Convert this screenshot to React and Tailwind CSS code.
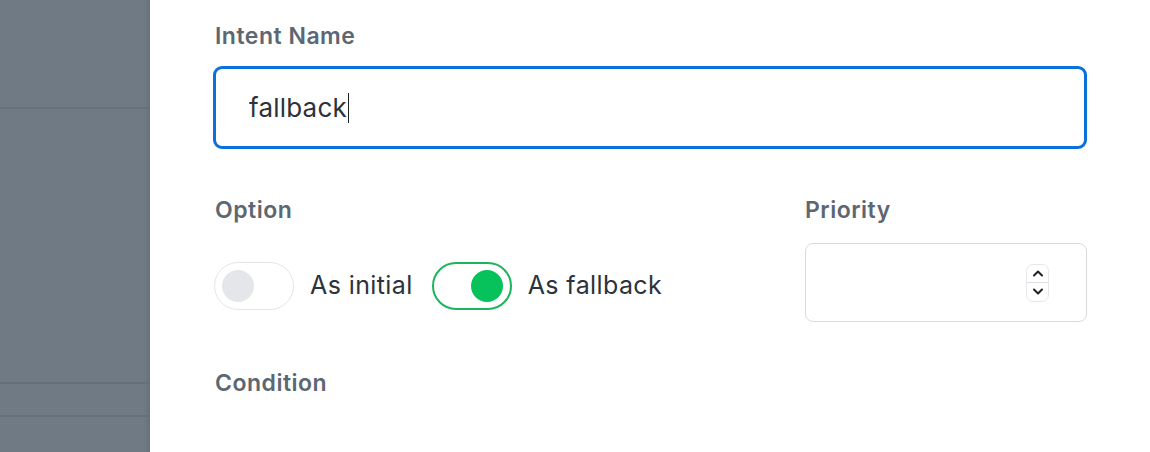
import React from "react";

function Toggle({ on }) {
  return (
    <div
      className={
        on
          ? "flex h-[48px] w-[80px] items-center justify-end rounded-full border-2 border-[#1db55c] bg-white px-[7px]"
          : "flex h-[48px] w-[80px] items-center justify-start rounded-full border-[1.5px] border-[#e3e5e8] bg-white px-[7px]"
      }
    >
      <div className={on ? "h-[32px] w-[32px] rounded-full bg-[#07c25a]" : "h-[32px] w-[32px] rounded-full bg-[#e4e6e9]"} />
    </div>
  );
}

function Spinner() {
  return (
    <div className="flex h-[38px] w-[23px] flex-col overflow-hidden rounded-[7px] border border-[#e6e7e9] bg-white">
      <div className="flex flex-1 items-center justify-center border-b border-[#dcdde0]">
        <svg width="12" height="8" viewBox="0 0 12 8" fill="none">
          <path d="M2 6.5 6 2.5 10 6.5" stroke="#1f2328" strokeWidth="2" strokeLinecap="round" strokeLinejoin="round" />
        </svg>
      </div>
      <div className="flex flex-1 items-center justify-center">
        <svg width="12" height="8" viewBox="0 0 12 8" fill="none">
          <path d="M2 1.5 6 5.5 10 1.5" stroke="#1f2328" strokeWidth="2" strokeLinecap="round" strokeLinejoin="round" />
        </svg>
      </div>
    </div>
  );
}

export default function App() {
  return (
    <div className="flex h-[452px] w-[1150px] overflow-hidden bg-white font-['Inter','Noto_Sans',sans-serif]">
      {/* dimmed page behind the drawer */}
      <div className="relative flex h-full w-[150px] shrink-0 flex-col bg-[#6f7a85]">
        <div className="h-[107px]" />
        <div className="h-[2px] bg-[#65707a]" />
        <div className="h-[273px]" />
        <div className="h-[2px] bg-[#65707a]" />
        <div className="h-[31px]" />
        <div className="h-[2px] bg-[#65707a]" />
        <div className="absolute inset-y-0 right-0 w-[6px] bg-gradient-to-r from-transparent to-[#66717b]" />
      </div>

      <div className="flex flex-1 flex-col px-[63px] pt-[22px]">
        <label className="pl-[2px] text-[23px] font-semibold leading-[28px] tracking-[0.5px] text-[#5c6772]">Intent Name</label>
        <div className="mt-[16px] flex h-[83px] items-center rounded-[9px] border-[3px] border-[#0b6fdc] pl-[33px]">
          <span className="text-[26px] leading-none tracking-[0.2px] text-[#2b333c]">fallback</span>
          <span className="ml-[1px] h-[30px] w-[1.5px] bg-[#1f2328]" />
        </div>

        <div className="mt-[47px] flex">
          <div className="flex flex-1 flex-col">
            <span className="pl-[2px] text-[23px] font-semibold leading-[28px] tracking-[0.5px] text-[#5c6772]">Option</span>
            <div className="mt-[38px] flex items-center pl-[1px]">
              <Toggle on={false} />
              <span className="ml-[16px] text-[25px] tracking-[0.4px] text-[#2b333c]">As initial</span>
              <div className="ml-[19px]">
                <Toggle on />
              </div>
              <span className="ml-[16px] text-[25px] tracking-[0.4px] text-[#2b333c]">As fallback</span>
            </div>
          </div>
          <div className="flex w-[282px] flex-col">
            <span className="text-[23px] font-semibold leading-[28px] tracking-[0.5px] text-[#5c6772]">Priority</span>
            <div className="mt-[19px] flex h-[79px] items-center justify-end rounded-[8px] border-[1.5px] border-[#d9dbde] pr-[37px]">
              <Spinner />
            </div>
          </div>
        </div>

        <span className="mt-[47px] pl-[2px] text-[23px] font-semibold leading-[28px] tracking-[0.5px] text-[#5c6772]">Condition</span>
      </div>
    </div>
  );
}
